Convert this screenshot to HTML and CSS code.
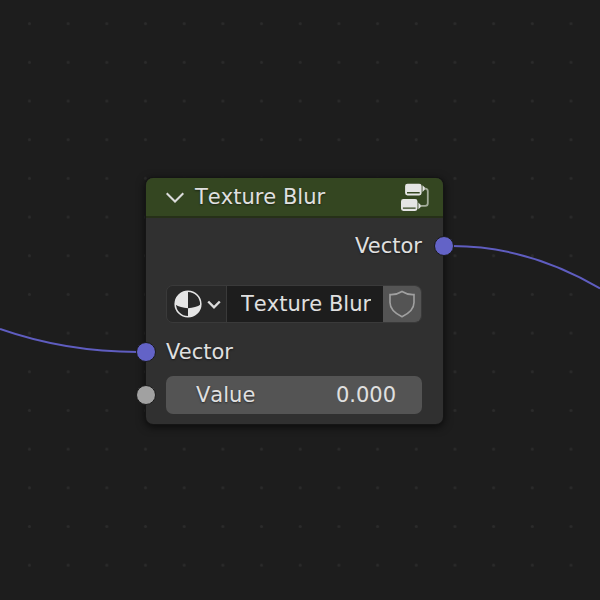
FILE: index.html
```html
<!DOCTYPE html>
<html lang="en">
<head>
<meta charset="utf-8">
<title>Texture Blur</title>
<link rel="stylesheet" href="styles.css">
</head>
<body>
<main class="canvas">
  <svg class="backdrop" aria-hidden="true">
    <defs>
      <pattern id="grid" x="10.2" y="4.3" width="38.68" height="38.68" patternUnits="userSpaceOnUse">
        <circle cx="19.3" cy="19.3" r="1.5" fill="#2b2b2b"/>
      </pattern>
    </defs>
    <rect width="100%" height="100%" fill="url(#grid)"/>
    <g class="links">
      <path d="M0 329C40 343 85 352 138 352"/>
      <path d="M452 246C505 246 555 262 600 288.5"/>
    </g>
  </svg>

  <section class="node">
    <header class="node-header">
      <button class="icon-button" aria-label="Collapse node">
        <svg width="18" height="12" viewBox="0 0 18 12"><path class="stroke" d="M.7 2.200L9 10.500L17.300 2.200"/></svg>
      </button>
      <h1 class="title">Texture Blur</h1>
      <button class="icon-button" aria-label="Edit node group">
        <svg width="28" height="28" viewBox="0 0 28 28">
          <g transform="translate(0 .7)">
            <path class="fill" fill-rule="evenodd" d="M6.500 0H18.200Q20.600 0 20.600 2.400V9.400Q20.600 11.800 18.200 11.800H6.500Q4.100 11.800 4.100 9.400V2.400Q4.100 0 6.500 0ZM6 8.400V9.700H18.700V8.400Z"/>
            <path class="fill" fill-rule="evenodd" d="M2.400 15.400H14.100Q16.500 15.400 16.500 17.800V24.800Q16.500 27.200 14.100 27.200H2.400Q0 27.200 0 24.800V17.800Q0 15.400 2.400 15.400ZM1.900 23.800V25.100H14.600V23.800Z"/>
            <path class="fill" d="M21.500 1.500L24.800 4.900L21.500 8.300ZM17.400 18.800L20.700 22.200L17.400 25.600Z"/>
            <path class="wire" d="M23.600 4.900H24.200Q26.800 4.900 26.800 7.500V19.600Q26.800 22.200 24.200 22.200H19.500"/>
          </g>
        </svg>
      </button>
    </header>

    <div class="node-body">
      <div class="row output">Vector<span class="socket socket-right vector"></span></div>

      <div class="datablock">
        <button class="chooser" aria-label="Browse node group">
          <svg width="28" height="28" viewBox="0 0 28 28">
            <circle cx="14" cy="14" r="12.8" fill="none" stroke="#e5e5e5" stroke-width="1.6"/>
            <path class="fill" d="M14 1V18.200Q6.500 18 1 14.300A13 13 0 0 1 14 1ZM14 18.200Q21.500 18 27 14.300A13 13 0 0 1 14 27Z"/>
          </svg>
          <svg width="14" height="10" viewBox="0 0 14 10"><path class="stroke bold" d="M1.200 2.500L7 8.300L12.800 2.500"/></svg>
        </button>
        <input class="name" type="text" value="Texture Blur" aria-label="Node group name">
        <button class="shield" aria-label="Fake user">
          <svg width="28" height="28" viewBox="0 0 28 28"><path d="M14 1.500Q8.500 5 2 4.600V12.500Q2 21 14 26.700Q26 21 26 12.500V4.600Q19.500 5 14 1.500Z" fill="none" stroke="#a0a0a0" stroke-width="1.600"/></svg>
        </button>
      </div>

      <div class="row input"><span class="socket socket-left vector"></span>Vector</div>
      <div class="row">
        <span class="socket socket-left float"></span>
        <div class="field">
          <label for="value">Value</label>
          <input id="value" type="text" inputmode="decimal" value="0.000">
        </div>
      </div>
    </div>
  </section>
</main>
</body>
</html>
```
FILE: styles.css
```css
* {
  box-sizing: border-box;
}

body {
  margin: 0;
  background: #1d1d1d;
  color: #e0e0e0;
  font: 21px/38px "DejaVu Sans", sans-serif;
  font-kerning: none;
}

button,
input {
  min-width: 0;
  margin: 0;
  padding: 0;
  border: 0;
  background: none;
  color: inherit;
  font: inherit;
  font-kerning: none;
}

svg {
  display: block;
  flex: none;
}

.canvas {
  position: relative;
  min-height: 100vh;
  overflow: hidden;
}

.backdrop {
  position: absolute;
  inset: 0;
  width: 100%;
  height: 100%;
}

.links {
  fill: none;
  stroke: #5f5dc0;
  stroke-width: 2;
}

.fill {
  fill: #e5e5e5;
}

.stroke {
  fill: none;
  stroke: #dcdcdc;
  stroke-width: 2;
}

.bold {
  stroke-width: 2.4;
}

.wire {
  fill: none;
  stroke: #a3ab99;
  stroke-width: 1.8;
}

.node {
  position: absolute;
  left: 146px;
  top: 178px;
  width: 297px;
  border-radius: 7px;
  background: #303030;
  box-shadow: 0 0 0 1px #151515, 0 2px 9px 1px rgba(0, 0, 0, 0.65);
  text-shadow: 0 1px 2px rgba(0, 0, 0, 0.5);
}

.node-header {
  display: flex;
  align-items: center;
  height: 40px;
  padding: 0 14px 0 20px;
  border-bottom: 2px solid #263018;
  border-radius: 7px 7px 0 0;
  background: #344621;
}

.title {
  flex: 1;
  margin: 0 0 0 11px;
  font-size: 21px;
  font-weight: 400;
}

.node-body {
  padding: 9px 21px 10px 20px;
}

.row {
  position: relative;
}

.output,
.input {
  font-kerning: normal;
}

.output {
  text-align: right;
}

.datablock {
  display: flex;
  height: 38px;
  margin: 20px 0 10px;
  border: 1px solid #3a3a3a;
  border-radius: 7px;
  overflow: hidden;
}

.chooser {
  display: flex;
  align-items: center;
  gap: 5px;
  padding: 0 5px 0 7px;
  border-right: 1px solid #3a3a3a;
  background: #282828;
}

.name {
  flex: 1;
  padding: 0 12px 0 14px;
  background: #1d1d1d;
}

.shield {
  padding: 0 5px;
  background: #545454;
}

.input {
  margin-bottom: 5px;
}

.field {
  display: flex;
  height: 38px;
  padding: 0 26px 0 30px;
  border-radius: 7px;
  background: #545454;
}

.field input {
  flex: 1;
  text-align: right;
}

.socket {
  position: absolute;
  top: 9px;
  width: 20px;
  height: 20px;
  border: 1px solid #1a1a1a;
  border-radius: 50%;
}

.socket-left {
  left: -30px;
}

.socket-right {
  right: -32px;
}

.vector {
  background: #6363c7;
}

.float {
  background: #a1a1a1;
}
```
